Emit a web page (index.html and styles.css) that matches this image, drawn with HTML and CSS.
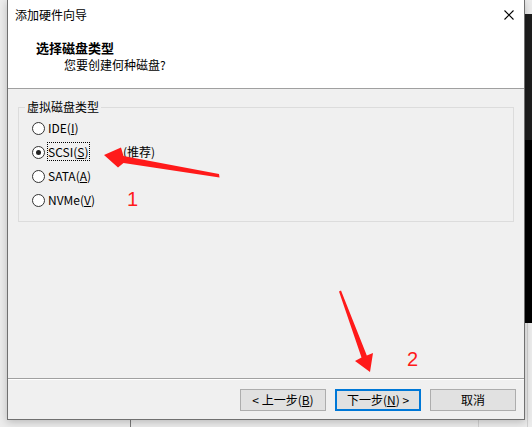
FILE: index.html
```html
<!DOCTYPE html>
<html lang="zh-CN">
<head>
<meta charset="utf-8">
<title>添加硬件向导</title>
<link rel="stylesheet" href="styles.css">
</head>
<body>
<div class="desk-dark"></div>
<div class="desk-line l1"></div>
<div class="desk-line l2"></div>
<div class="desk-line l3"></div>
<div class="dialog">
  <div class="titlebar">
    <span class="title">添加硬件向导</span>
    <svg class="close" width="10" height="10" viewBox="0 0 10 10"><path d="M0.5 0.5 L9.5 9.5 M9.5 0.5 L0.5 9.5" stroke="#000" stroke-width="1.1" fill="none"/></svg>
  </div>
  <div class="header">
    <div class="h-title">选择磁盘类型</div>
    <div class="h-sub">您要创建何种磁盘?</div>
  </div>
  <div class="body">
    <fieldset class="group">
      <legend>虚拟磁盘类型</legend>
      <div class="row"><span class="radio"></span><span class="lbl">IDE(<u>I</u>)</span></div>
      <div class="row"><span class="radio on"></span><span class="lbl"><span class="focus">SCSI(<u>S</u>)</span></span><span class="rec">(推荐)</span></div>
      <div class="row"><span class="radio"></span><span class="lbl">SATA(<u>A</u>)</span></div>
      <div class="row"><span class="radio"></span><span class="lbl">NVMe(<u>V</u>)</span></div>
    </fieldset>
  </div>
  <div class="footer">
    <button class="btn">&lt; 上一步(<u>B</u>)</button>
    <button class="btn primary">下一步(<u>N</u>) &gt;</button>
    <button class="btn">取消</button>
  </div>
</div>
<svg class="annot" width="532" height="427" viewBox="0 0 532 427">
  <polygon points="104,155 121,147.5 123.5,156 219,174 219.5,177.5 123.5,163 118,167.5" fill="#ff1a1a"/>
  <polygon points="339,291.5 341,290.5 366.8,355.5 373,353 370,372 355,361 361.5,357.5" fill="#ff1a1a"/>
</svg>
<span class="num n1">1</span>
<span class="num n2">2</span>
</body>
</html>
```
FILE: styles.css
```css
html, body {
  margin: 0;
  padding: 0;
}
body {
  width: 532px;
  height: 427px;
  overflow: hidden;
  background: #ececec;
  font-family: "Noto Sans CJK SC", "Liberation Sans", sans-serif;
  font-size: 12px;
  color: #000;
  position: relative;
}
.desk-dark {
  position: absolute;
  left: 525px;
  top: 14px;
  width: 7px;
  height: 309px;
  background: linear-gradient(#1e1e1e 0, #1e1e1e 126px, #000 126px, #000 100%);
}
.desk-line {
  position: absolute;
  width: 1px;
  background: #7a7a7a;
}
.l1 { left: 130px; top: 419px; height: 8px; }
.l2 { left: 478px; top: 419px; height: 8px; background: #d0d0d0; }
.l3 { left: 527px; top: 323px; height: 104px; background: #d0d0d0; }
.dialog {
  margin-left: 7px;
  width: 516px;
  height: 419px;
  border: 1px solid #707070;
  border-top: none;
  background: #f0f0f0;
  display: flex;
  flex-direction: column;
  box-shadow: 0 2px 8px rgba(0, 0, 0, 0.22);
  position: relative;
}
.titlebar {
  height: 30px;
  background: #fff;
  display: flex;
  align-items: center;
  justify-content: space-between;
  padding: 0 10px 0 7px;
}
.title {
  line-height: 16px;
  position: relative;
  top: 0;
}
.close {
  display: block;
  margin-top: 0;
}
.header {
  height: 58px;
  background: #fff;
  border-bottom: 1px solid #a0a0a0;
  box-sizing: border-box;
  height: 59px;
  padding-top: 9px;
}
.h-title {
  font-weight: bold;
  font-size: 13px;
  line-height: 17px;
  padding-left: 28px;
}
.h-sub {
  line-height: 17px;
  padding-left: 56px;
}
.body {
  flex: 1;
  padding: 10px 10px 0 10px;
  border-bottom: 1px solid #a0a0a0;
}
.group {
  margin: 0;
  height: 123px;
  box-sizing: border-box;
  border: 1px solid #dcdcdc;
  padding: 0 0 0 6px;
}
.group legend {
  padding: 0 2px;
  line-height: 16px;
}
.row {
  height: 24px;
  display: flex;
  align-items: center;
}
.row:first-of-type {
  margin-top: 1px;
}
.radio {
  width: 13px;
  height: 13px;
  box-sizing: border-box;
  border: 1px solid #333;
  border-radius: 50%;
  background: #fff;
  margin-left: 7px;
  display: flex;
  align-items: center;
  justify-content: center;
}
.radio.on::after {
  content: "";
  width: 5px;
  height: 5px;
  border-radius: 50%;
  background: #222;
}
.lbl {
  margin-left: 3px;
  width: 75px;
  line-height: 16px;
}
.focus {
  outline: 1px dotted #000;
  outline-offset: 0;
  padding: 0 1px 0 0;
}
.rec {
  line-height: 16px;
}
.footer {
  height: 39px;
  border-top: 1px solid #fff;
  box-sizing: border-box;
  height: 40px;
  display: flex;
  justify-content: flex-end;
  align-items: flex-start;
  gap: 9px;
  padding: 9px 8px 0 0;
}
.btn {
  width: 86px;
  height: 22px;
  box-sizing: border-box;
  border: 1px solid #adadad;
  background: #e1e1e1;
  font-family: "Noto Sans CJK SC", "Liberation Sans", sans-serif;
  font-size: 12px;
  color: #000;
  padding: 0;
  line-height: 18px;
}
.btn.primary {
  border: 2px solid #0078d7;
}
.annot {
  position: absolute;
  left: 0;
  top: 0;
}
.num {
  position: absolute;
  color: #ff1a1a;
  font-family: "Liberation Sans", sans-serif;
  font-size: 20px;
  line-height: 20px;
}
.n1 { left: 127px; top: 189px; }
.n2 { left: 407px; top: 349px; }
```
